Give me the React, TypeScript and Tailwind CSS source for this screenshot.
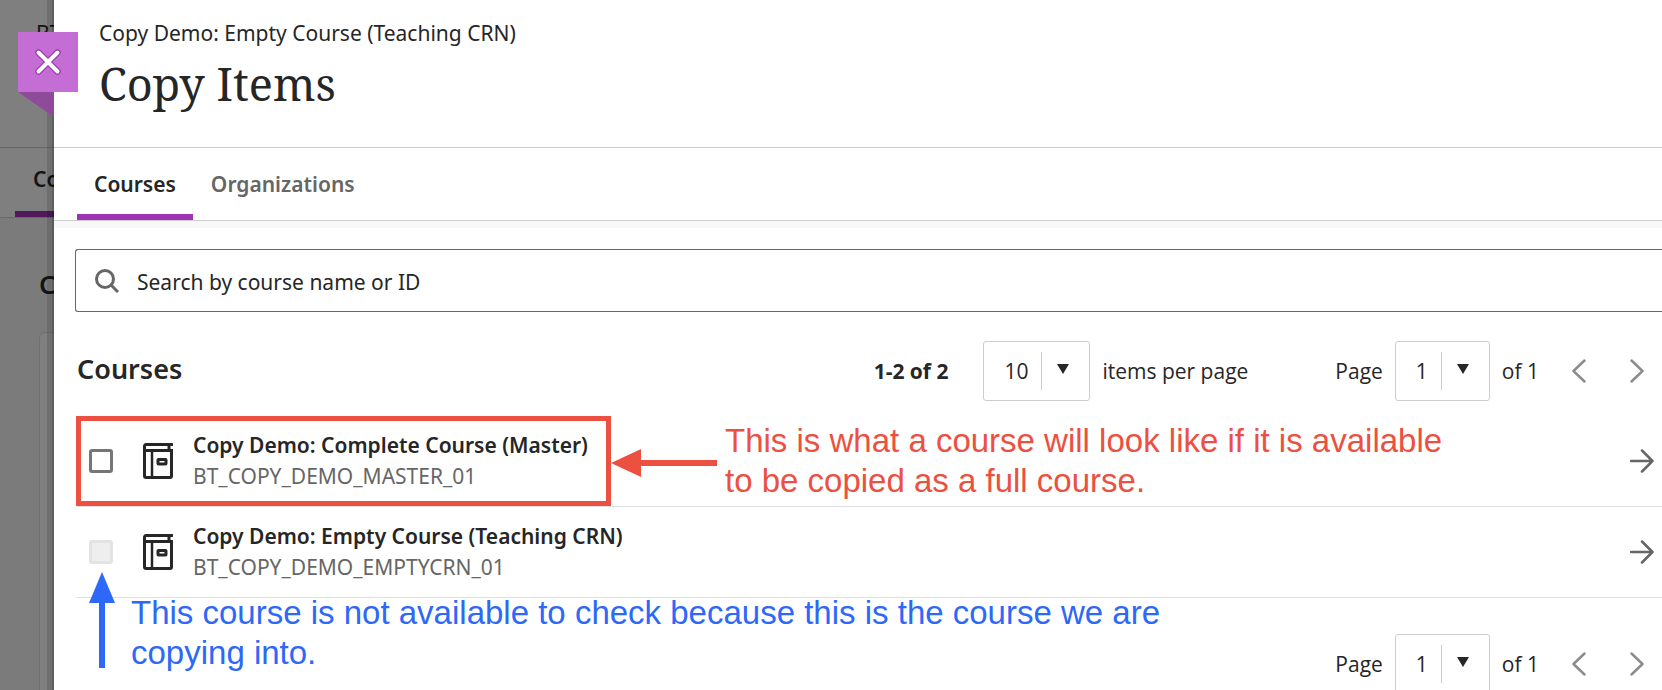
import { useState } from "react"

interface Course {
  id: string
  name: string
  available: boolean
}

const courses: Course[] = [
  { id: "BT_COPY_DEMO_MASTER_01", name: "Copy Demo: Complete Course (Master)", available: true },
  { id: "BT_COPY_DEMO_EMPTYCRN_01", name: "Copy Demo: Empty Course (Teaching CRN)", available: false },
]

function CourseIcon() {
  return (
    <svg width="30" height="36" viewBox="0 0 30 36" fill="none" stroke="#262626" className="shrink-0" aria-hidden="true">
      <path d="M29 1.500H3a1.500 1.500 0 0 0-1.500 1.500v30A1.500 1.500 0 0 0 3 34.500h24a1.500 1.500 0 0 0 1.500-1.500V7.500H1.500M26 2v5" strokeWidth="3" strokeLinecap="round" />
      <path d="M9 8v26" strokeWidth="2.5" />
      <rect x="15" y="16.5" width="8" height="4.5" rx="0.5" strokeWidth="3" />
    </svg>
  )
}

interface SelectProps {
  id: string
  value: string
  options: string[]
  onChange: (v: string) => void
  className: string
}

function Select({ id, value, options, onChange, className }: SelectProps) {
  return (
    <div className={`relative h-[60px] shrink-0 ${className}`}>
      <select
        id={id}
        value={value}
        onChange={(e) => onChange(e.target.value)}
        className="h-full w-full appearance-none rounded-[3px] border border-[#cdcdcd] bg-white pt-0.5 pl-5 text-[21px] text-[#262626]"
      >
        {options.map((o) => (
          <option key={o}>{o}</option>
        ))}
      </select>
      <div className="pointer-events-none absolute inset-y-[11px] right-0 flex w-[49px] justify-center border-l border-[#cdcdcd] pt-3 pr-1.5">
        <svg width="12" height="10" viewBox="0 0 12 10" fill="#262626" aria-hidden="true">
          <path d="M0 0h12L6 10z" />
        </svg>
      </div>
    </div>
  )
}

function PageNav({ id }: { id: string }) {
  const [page, setPage] = useState("1")

  return (
    <nav aria-label="Pagination" className="flex items-center font-['Open_Sans',sans-serif] text-[21px]">
      <label htmlFor={id} className="mr-3 pt-0.5">
        Page
      </label>
      <Select id={id} value={page} options={["1"]} onChange={setPage} className="w-[95px]" />
      <span className="ml-3 pt-0.5">of 1</span>
      <button type="button" aria-label="Previous page" className="ml-[33px] text-[#8c8c8c]">
        <svg width="14" height="24" viewBox="0 0 14 24" fill="none" stroke="currentColor" strokeWidth="2.5" strokeLinecap="round" strokeLinejoin="round">
          <path d="M12.5 1.5 1.5 12l11 10.5" />
        </svg>
      </button>
      <button type="button" aria-label="Next page" className="ml-11 text-[#8c8c8c]">
        <svg width="14" height="24" viewBox="0 0 14 24" fill="none" stroke="currentColor" strokeWidth="2.5" strokeLinecap="round" strokeLinejoin="round">
          <path d="m1.5 1.5 11 10.5-11 10.5" />
        </svg>
      </button>
    </nav>
  )
}

function CourseRow({ course, children }: { course: Course; children?: React.ReactNode }) {
  const [checked, setChecked] = useState(false)

  return (
    <li className="relative flex h-[91px] items-center border-b border-[#dedede] pr-2 pl-3">
      <input
        id={course.id}
        type="checkbox"
        checked={checked}
        disabled={!course.available}
        onChange={(e) => setChecked(e.target.checked)}
        className="size-6 shrink-0 appearance-none rounded-[3px] border-3 border-[#767676] bg-white checked:bg-[#a033b3] disabled:border-[#e3e3e3] disabled:bg-[#eeeeee]"
      />
      <label htmlFor={course.id} className="ml-[30px] flex flex-1 items-center gap-5">
        <CourseIcon />
        <span className="flex flex-col text-[21px] leading-[31px]">
          <span className="font-semibold">{course.name}</span>
          <span className="text-[#666666]">{course.id}</span>
        </span>
      </label>
      <button type="button" aria-label={`Open ${course.name}`} className="text-[#666666]">
        <svg width="24" height="24" viewBox="0 0 24 24" fill="none" stroke="currentColor" strokeWidth="2.5" strokeLinecap="round" strokeLinejoin="round">
          <path d="M1 12h21.5M12 1.5 22.5 12 12 22.5" />
        </svg>
      </button>
      {children}
    </li>
  )
}

// Dimmed course page that stays visible behind the panel
function Backdrop() {
  return (
    <div aria-hidden="true" className="relative w-[54px] shrink-0 overflow-hidden bg-[#7f7f7f] whitespace-nowrap text-[#141414]">
      <div className="h-[148px] border-b border-[#666666] pt-[18px] pl-9 text-[21px] leading-[30px]">BT</div>
      <div className="flex h-[70px] flex-col justify-between border-b border-[#686868] pt-4">
        <span className="pl-[33px] text-[21px] leading-[30px] font-semibold">Co</span>
        <span className="ml-[15px] h-[6px] bg-[#501a5a]" />
      </div>
      <div className="h-full bg-[#7b7b7b] pt-12 pl-[39px]">
        <div className="text-[26px] leading-[36px] font-semibold">C</div>
        <div className="mt-[30px] h-full w-40 rounded-md border border-[#707070] bg-[#7f7f7f]" />
      </div>
      <div className="absolute inset-y-0 right-0 w-[7px] border-r-2 border-black/15 bg-black/12" />
    </div>
  )
}

export default function App() {
  const [query, setQuery] = useState("")
  const [perPage, setPerPage] = useState("10")

  return (
    <div className="relative flex h-screen overflow-hidden bg-white font-['Noto_Sans',sans-serif] text-[#262626]">
      <Backdrop />

      <div className="absolute top-8 left-[18px]">
        <button type="button" aria-label="Close" className="flex size-[60px] items-center justify-center bg-[#c46dd4]">
          <svg width="26" height="26" viewBox="0 0 26 26" fill="none" strokeLinecap="round">
            <path d="m3.500 3.500 19 19M22.500 3.500l-19 19" stroke="#a033b3" strokeWidth="6.5" />
            <path d="m3.500 3.500 19 19M22.500 3.500l-19 19" stroke="#ffffff" strokeWidth="4" />
          </svg>
        </button>
        <svg width="36" height="25" viewBox="0 0 36 25" fill="#8e4b9a" aria-hidden="true">
          <path d="M0 0h36v25z" />
        </svg>
      </div>

      <main className="min-w-0 flex-1">
        <header className="h-[148px] border-b border-[#cdcdcd] pt-[18px] pl-[45px]">
          <p className="text-[21px] leading-[30px]">Copy Demo: Empty Course (Teaching CRN)</p>
          <h1 className="mt-1 font-['Noto_Serif','DejaVu_Serif_Condensed','DejaVu_Serif',serif] text-[45px] leading-[64px]">Copy Items</h1>
        </header>

        <div role="tablist" className="flex h-[73px] border-b border-[#cdcdcd] pl-[23px] text-[21px] font-semibold">
          <button type="button" role="tab" aria-selected="true" className="border-b-6 border-[#a033b3] px-[17px] pt-2">
            Courses
          </button>
          <button type="button" role="tab" aria-selected="false" className="border-b-6 border-transparent px-[18px] pt-2 text-[#666666]">
            Organizations
          </button>
        </div>
        <div className="h-[7px] bg-[#f8f8f8]" />

        <div className="pt-[21px] pl-[21px]">
          <div className="flex h-[63px] items-center gap-[18px] rounded-l-[3px] border border-r-0 border-[#666666] pl-[19px]">
            <svg width="24" height="24" viewBox="0 0 24 24" fill="none" stroke="#666666" strokeWidth="3" className="shrink-0" aria-hidden="true">
              <circle cx="10" cy="10" r="8.5" />
              <path d="m16 16 7 7" />
            </svg>
            <input
              type="text"
              aria-label="Search by course name or ID"
              value={query}
              onChange={(e) => setQuery(e.target.value)}
              placeholder="Search by course name or ID"
              className="h-full min-w-0 flex-1 bg-transparent pt-0.5 text-[21px] outline-none placeholder:text-[#262626]"
            />
          </div>
        </div>

        <section className="pl-[23px]">
          <div className="flex items-center pt-[29px] pr-[18px]">
            <h2 className="flex-1 pb-1 text-[27px] leading-[36px] font-semibold">Courses</h2>
            <div className="mr-[87px] flex items-center font-['Open_Sans',sans-serif] text-[21px]">
              <span className="mr-[35px] pt-0.5 font-bold">1-2 of 2</span>
              <Select id="per-page" value={perPage} options={["10", "25", "50"]} onChange={setPerPage} className="w-[107px]" />
              <label htmlFor="per-page" className="ml-3 pt-0.5">
                items per page
              </label>
            </div>
            <PageNav id="page-top" />
          </div>

          <ul className="mt-[15px]">
            <CourseRow course={courses[0]}>
              <div className="pointer-events-none absolute top-0 -left-px flex h-[90px] items-center">
                <div className="h-full w-[535px] border-5 border-[#eb5040]" />
                <svg width="106" height="32" viewBox="0 0 106 32" fill="#eb5040" aria-hidden="true">
                  <path d="M0 18 30 4v11h76v6H30v11z" />
                </svg>
                <p className="ml-2 w-[740px] font-['Liberation_Sans',Arial,sans-serif] text-[33px] leading-10 text-[#eb5040]">
                  This is what a course will look like if it is available to be copied as a full course.
                </p>
              </div>
            </CourseRow>
            <CourseRow course={courses[1]}>
              <div className="pointer-events-none absolute top-[65px] left-3 flex">
                <svg width="26" height="96" viewBox="0 0 26 96" fill="#2d68f8" aria-hidden="true">
                  <path d="M13 0 26 31H16v65h-6V31H0z" />
                </svg>
                <p className="mt-[21px] ml-4 w-[1060px] font-['Liberation_Sans',Arial,sans-serif] text-[33px] leading-10 text-[#2d68f8]">
                  This course is not available to check because this is the course we are copying into.
                </p>
              </div>
            </CourseRow>
          </ul>

          <div className="flex justify-end pt-9 pr-[18px]">
            <PageNav id="page-bottom" />
          </div>
        </section>
      </main>
    </div>
  )
}
